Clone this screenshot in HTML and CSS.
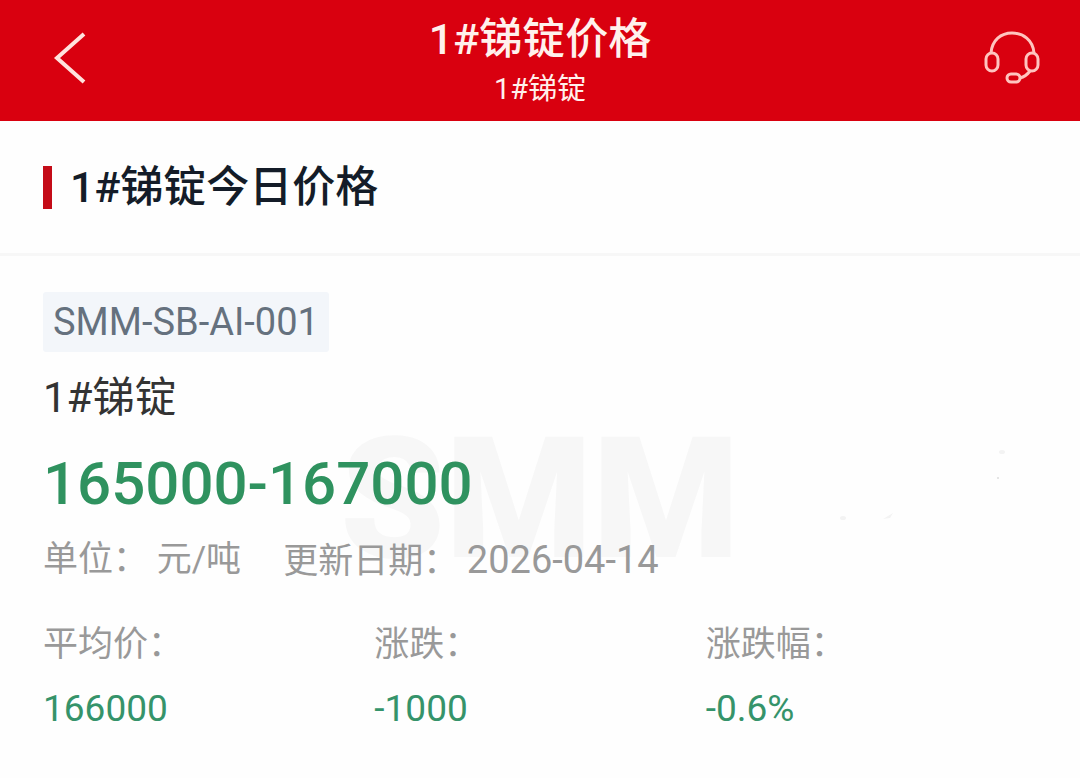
FILE: index.html
```html
<!DOCTYPE html>
<html lang="zh-CN">
<head>
    <meta charset="UTF-8">
    <meta name="viewport" content="width=device-width, initial-scale=1.0">
    <title>1#锑锭价格</title>
    <link rel="stylesheet" href="styles.css">
</head>
<body>
    <header class="header">
        <button class="icon-btn" type="button" aria-label="返回">
            <svg width="60" height="60" viewBox="0 0 60 60">
                <path d="M46 5 L19 29 L46 53" />
            </svg>
        </button>
        <div class="header-title">
            <h1>1#锑锭价格</h1>
            <p>1#锑锭</p>
        </div>
        <button class="icon-btn" type="button" aria-label="客服">
            <svg class="headset" width="60" height="60" viewBox="0 0 60 60">
                <path d="M9 24 C10 11 19 4 30 4 C41 4 51 11 52 24" />
                <rect x="4" y="24" width="12" height="18" rx="6" />
                <rect x="44" y="24" width="12" height="18" rx="6" />
                <path d="M48 42 C45 46 42 48 38 49" />
                <rect x="25" y="45" width="13" height="8" rx="4" />
            </svg>
        </button>
    </header>

    <main>
        <div class="section-head">
            <h2>1#锑锭今日价格</h2>
        </div>

        <section class="quote">
            <div class="watermark" aria-hidden="true">SMM</div>
            <svg class="specks" width="180" height="80" viewBox="0 0 180 80" aria-hidden="true">
                <ellipse cx="172" cy="6" rx="3" ry="2" />
                <circle class="dark" cx="168" cy="32" r="1" />
                <ellipse cx="13" cy="72" rx="3" ry="2" />
                <path d="M53 73 L63 67 L60 72 Z" />
            </svg>

            <span class="code">SMM-SB-AI-001</span>
            <p class="name">1#锑锭</p>
            <p class="price">165000-167000</p>
            <p class="meta">
                <span>单位： 元/吨</span>
                <span>更新日期： <time datetime="2026-04-14">2026-04-14</time></span>
            </p>

            <dl class="stats">
                <div>
                    <dt>平均价：</dt>
                    <dd>166000</dd>
                </div>
                <div>
                    <dt>涨跌：</dt>
                    <dd>-1000</dd>
                </div>
                <div>
                    <dt>涨跌幅：</dt>
                    <dd>-0.6%</dd>
                </div>
            </dl>
        </section>
    </main>
</body>
</html>
```
FILE: styles.css
```css
* { margin: 0; padding: 0; box-sizing: border-box; }
body {
    font-family: Roboto, 'Noto Sans CJK SC', sans-serif;
    background: #fefefe;
    color: #333;
}
.header {
    display: flex;
    justify-content: space-between;
    align-items: center;
    padding: 9px 38px 12px;
    background: #d9000f;
    color: #fff1ec;
}
.header-title {
    text-align: center;
}
.header h1 {
    font-size: 43px;
    font-weight: 500;
    line-height: 60px;
}
.header p {
    font-size: 29px;
    line-height: 40px;
}
.icon-btn {
    width: 60px;
    height: 60px;
    background: none;
    border: none;
    cursor: pointer;
}
.icon-btn svg {
    display: block;
    fill: none;
    stroke: #ffe3dd;
    stroke-width: 4;
}
.icon-btn .headset {
    stroke: #ffc4bf;
    stroke-width: 3;
}
.section-head {
    padding: 36px 43px;
    border-bottom: 3px solid #f7f7f7;
}
.section-head h2 {
    display: flex;
    align-items: center;
    gap: 18px;
    font-size: 43px;
    font-weight: 500;
    line-height: 60px;
    color: #141c28;
}
.section-head h2::before {
    content: '';
    width: 9px;
    height: 43px;
    background: #c40c18;
}
.quote {
    position: relative;
    z-index: 0;
    padding: 36px 43px;
}
.watermark {
    position: absolute;
    z-index: -1;
    top: 160px;
    left: 340px;
    font-size: 168px;
    font-weight: 900;
    line-height: 168px;
    color: #f7f7f7;
}
.specks {
    position: absolute;
    z-index: -1;
    top: 190px;
    right: 70px;
    fill: #f3f3f3;
}
.specks .dark { fill: #ddd; }
.code {
    display: inline-block;
    padding: 0 10px;
    font-size: 38px;
    line-height: 60px;
    color: #65717e;
    background: #f3f6fa;
    border-radius: 3px;
}
.name {
    margin-top: 16px;
    font-size: 42px;
    line-height: 60px;
}
.price {
    margin-top: 16px;
    font-size: 60px;
    font-weight: 500;
    line-height: 80px;
    color: #2f925f;
}
.meta {
    display: flex;
    gap: 42px;
    margin-top: 12px;
    font-size: 35px;
    line-height: 48px;
    color: #999;
}
.meta time { font-size: 38px; }
.stats {
    display: grid;
    grid-template-columns: repeat(3, 1fr);
    margin-top: 35px;
    line-height: 48px;
}
.stats dt {
    font-size: 35px;
    color: #999;
}
.stats dd {
    margin-top: 16px;
    font-size: 37px;
    color: #35936a;
}
```
